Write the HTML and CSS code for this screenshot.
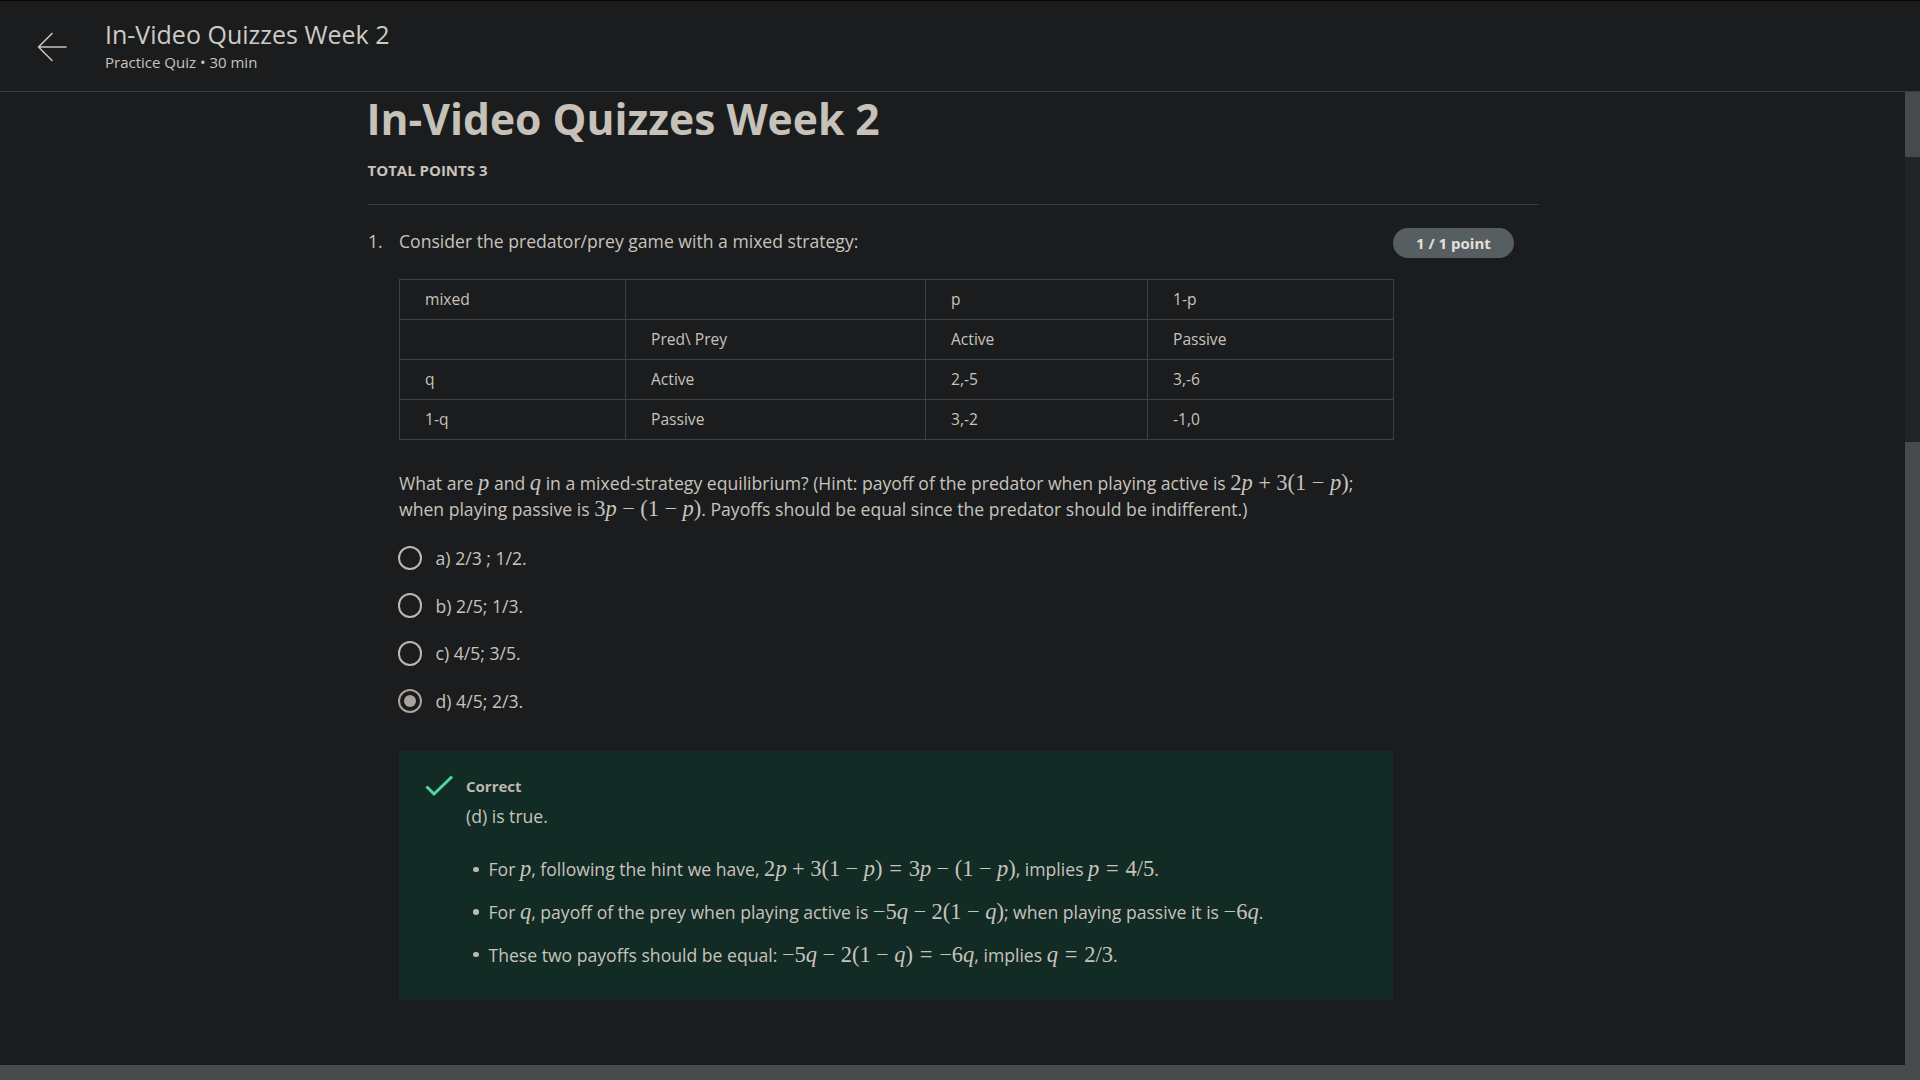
FILE: index.html
```html
<!DOCTYPE html>
<html lang="en">
<head>
<meta charset="utf-8">
<title>In-Video Quizzes Week 2</title>
<link rel="stylesheet" href="styles.css">
</head>
<body>
<div class="app">
  <header class="topbar">
    <svg class="back" width="30" height="30" viewBox="0 0 30 30" fill="none" stroke="currentColor" stroke-width="1.6" stroke-linecap="round" stroke-linejoin="round">
      <path d="M29 15H1.5M15 1.5L1.5 15L15 28.5"/>
    </svg>
    <div class="titles">
      <div class="t1">In-Video Quizzes Week 2</div>
      <div class="t2">Practice Quiz • 30 min</div>
    </div>
  </header>

  <main class="main">
    <div class="content">
      <h1 class="heading">In-Video Quizzes Week 2</h1>
      <div class="total">TOTAL POINTS 3</div>

      <div class="question">
        <div class="qnum">1.</div>
        <div class="qbody">
          <p class="qtext">Consider the predator/prey game with a mixed strategy:</p>
          <table class="grid">
            <colgroup><col class="c1"><col class="c2"><col class="c3"><col class="c4"></colgroup>
            <tr><td>mixed</td><td></td><td>p</td><td>1-p</td></tr>
            <tr><td></td><td>Pred\ Prey</td><td>Active</td><td>Passive</td></tr>
            <tr><td>q</td><td>Active</td><td>2,-5</td><td>3,-6</td></tr>
            <tr><td>1-q</td><td>Passive</td><td>3,-2</td><td>-1,0</td></tr>
          </table>
          <p class="hint">What are <span class="m"><i>p</i></span> and <span class="m"><i>q</i></span> in a mixed-strategy equilibrium? (Hint: payoff of the predator when playing active is <span class="m">2<i>p</i><b>+</b>3(1<b>−</b><i>p</i>)</span>; when playing passive is <span class="m">3<i>p</i><b>−</b>(1<b>−</b><i>p</i>)</span>. Payoffs should be equal since the predator should be indifferent.)</p>

          <div class="options">
            <div class="opt"><span class="radio"></span><span>a) 2/3 ; 1/2.</span></div>
            <div class="opt"><span class="radio"></span><span>b) 2/5; 1/3.</span></div>
            <div class="opt"><span class="radio"></span><span>c) 4/5; 3/5.</span></div>
            <div class="opt"><span class="radio on"></span><span>d) 4/5; 2/3.</span></div>
          </div>

          <div class="feedback">
            <svg class="check" width="28" height="22" viewBox="0 0 28 22" fill="none" stroke="#4fd3a3" stroke-width="3" stroke-linecap="square">
              <path d="M2.5 12.5L9 19L26 2.5"/>
            </svg>
            <div class="fbody">
              <div class="fhead">Correct</div>
              <p class="fline">(d) is true.</p>
              <ul class="steps">
                <li><span>For <span class="m"><i>p</i></span>, following the hint we have, <span class="m">2<i>p</i><b>+</b>3(1<b>−</b><i>p</i>)<s>=</s>3<i>p</i><b>−</b>(1<b>−</b><i>p</i>)</span>, implies <span class="m"><i>p</i><s>=</s>4/5</span>.</span></li>
                <li><span>For <span class="m"><i>q</i></span>, payoff of the prey when playing active is <span class="m">−5<i>q</i><b>−</b>2(1<b>−</b><i>q</i>)</span>; when playing passive it is <span class="m">−6<i>q</i></span>.</span></li>
                <li><span>These two payoffs should be equal: <span class="m">−5<i>q</i><b>−</b>2(1<b>−</b><i>q</i>)<s>=</s>−6<i>q</i></span>, implies <span class="m"><i>q</i><s>=</s>2/3</span>.</span></li>
              </ul>
            </div>
          </div>
        </div>
        <div class="badge">1 / 1 point</div>
      </div>
    </div>
  </main>

  <div class="vscroll">
    <div class="thumb top"></div>
    <div class="track"></div>
    <div class="thumb rest"></div>
  </div>
  <div class="hscroll"></div>
</div>
</body>
</html>
```
FILE: styles.css
```css
* { box-sizing: border-box; }
html, body { margin: 0; padding: 0; height: 100%; }
body {
  background: #1b1c1e;
  color: #c8c3bc;
  font-family: "Open Sans", "Noto Sans", sans-serif;
  overflow: hidden;
}
.app {
  height: 100vh;
  display: grid;
  grid-template-columns: 1fr 15px;
  grid-template-rows: 92px 1fr 15px;
}
.topbar {
  grid-column: 1 / 3;
  grid-row: 1;
  border-top: 1px solid #050505;
  border-bottom: 1px solid #3d3e40;
  background: #1b1c1e;
  display: flex;
  align-items: flex-start;
  padding: 17px 0 0 37px;
}
.back { color: #c8c3bc; margin-top: 14px; flex: none; }
.titles { margin-left: 38px; }
.t1 { font-size: 25px; line-height: 32.5px; color: #cfcac3; }
.t2 { font-size: 15px; line-height: 20px; margin-top: 1px; color: #c8c3bc; }

.main { grid-column: 1; grid-row: 2; min-height: 0; }
.content { width: 1172px; margin: 0 auto; padding-top: 1px; }
.heading {
  margin: 0;
  font-size: 42.6px;
  font-weight: 700;
  line-height: 1.2;
  color: #c6c1b9;
}
.total {
  margin-top: 16px;
  font-size: 15px;
  font-weight: 700;
  line-height: 20px;
  color: #c8c3bc;
  padding-bottom: 24px;
  border-bottom: 1px solid #3a3b3d;
  margin-left: 1px;
}
.question {
  display: flex;
  align-items: flex-start;
  padding-top: 23px;
  font-size: 17.6px;
  line-height: 26.4px;
}
.qnum { width: 32.5px; flex: none; padding-left: 1.5px; }
.qbody { width: 994px; flex: none; }
.qtext { margin: 0; }
.badge {
  flex: none;
  height: 30px;
  line-height: 30px;
  padding: 0 23px;
  border-radius: 15px;
  background: #575e61;
  color: #e3e0db;
  font-size: 15px;
  font-weight: 700;
}
.grid {
  margin-top: 24px;
  border-collapse: collapse;
  width: 994px;
  table-layout: fixed;
  font-size: 15.6px;
}
.c1 { width: 226px; }
.c2 { width: 300px; }
.c3 { width: 222px; }
.c4 { width: 246px; }
.grid td {
  border: 1px solid #3e4042;
  height: 40px;
  padding: 0 26px 0 25px;
  line-height: 20px;
  vertical-align: middle;
}
.hint { margin: 30px 0 0; }
.m {
  font-family: "Liberation Serif", "DejaVu Serif", serif;
  font-size: 1.28em;
  line-height: 1;
  white-space: nowrap;
}
.m i { font-style: italic; }
.m b { font-weight: 400; margin: 0 0.24em; }
.m s { text-decoration: none; margin: 0 0.3em; }

.options { margin-top: 12px; }
.opt {
  height: 47.6px;
  display: flex;
  align-items: center;
  gap: 13.5px;
  margin-left: -1.5px;
}
.radio {
  width: 24.6px;
  height: 24.6px;
  border-radius: 50%;
  border: 2.5px solid #bdb8b0;
  flex: none;
  display: flex;
  align-items: center;
  justify-content: center;
}
.radio.on { border-color: #a8a39b; }
.radio.on::after {
  content: "";
  width: 12px;
  height: 12px;
  border-radius: 50%;
  background: #a8a39b;
}

.feedback {
  margin-top: 26px;
  background: #122b25;
  display: flex;
  align-items: flex-start;
  padding: 24px 20px 32px 26px;
  height: 249px;
}
.check { flex: none; margin-top: 0; }
.fbody { margin-left: 13px; }
.fhead {
  font-size: 15px;
  font-weight: 700;
  line-height: 20px;
  color: #bdb8b0;
  margin-top: 1px;
}
.fline { margin: 7px 0 0; }
.steps {
  list-style: none;
  margin: 27px 0 0;
  padding: 0 0 0 7px;
}
.steps li {
  display: flex;
  align-items: center;
  margin-bottom: 16.3px;
}
.steps li::before {
  content: "";
  width: 5.5px;
  height: 5.5px;
  border-radius: 50%;
  background: #bdb8b0;
  flex: none;
  margin-right: 10px;
}

.vscroll {
  grid-column: 2;
  grid-row: 2;
  display: flex;
  flex-direction: column;
  background: #454b4d;
}
.thumb.top { height: 65px; background: #454b4d; }
.track { height: 285px; background: #212526; }
.thumb.rest { flex: 1; background: #454b4d; }
.hscroll {
  grid-column: 1 / 3;
  grid-row: 3;
  background: #454b4d;
}
```
